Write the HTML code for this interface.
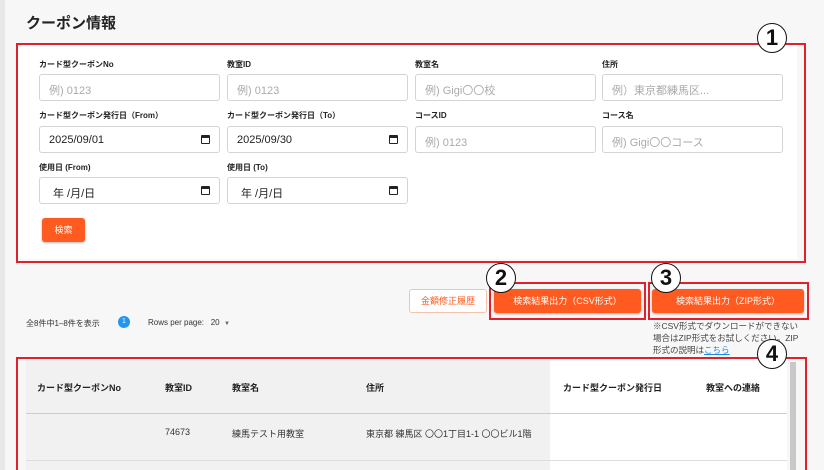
<!DOCTYPE html>
<html><head><meta charset="utf-8"><style>
*{box-sizing:border-box;margin:0;padding:0}
html{width:824px;height:470px;overflow:hidden}
body{width:824px;height:470px;overflow:hidden;background:#f7f7f7;font-family:"Liberation Sans","Noto Sans CJK JP",sans-serif;position:relative;color:#222}
.a{position:absolute}
.red{position:absolute;border:2px solid #e0202c}
.lbl{position:absolute;font-size:8px;font-weight:bold;color:#222}
.in{position:absolute;width:181px;height:27px;border:1px solid #d4d4d4;border-radius:3px;background:#fff;font-size:11px;color:#aaa;padding:7px 0 0 9px}
.in.d{color:#222}
.cal{position:absolute;right:9px;top:8px;width:9px;height:9px;border:1.5px solid #222;border-top-width:3px;border-radius:1px}
.num{position:absolute;width:30px;height:30px;border:1.5px solid #111;border-radius:50%;background:#fff;font-size:22px;font-weight:bold;text-align:center;line-height:28px;color:#111}
.btn{position:absolute;background:#ff5a1f;color:#fff;font-size:9px;text-align:center;border-radius:3px;box-shadow:0 1px 2px rgba(0,0,0,.3)}
</style></head><body>
<div class="a" style="left:0;top:0;width:5px;height:470px;background:#e8e8e8"></div>
<div class="a" style="left:26px;top:12px;font-size:15px;font-weight:bold">クーポン情報</div>
<div class="a" style="left:18px;top:45px;width:779px;height:214px;background:#fff"></div>
<div class="red" style="left:16px;top:43px;width:790px;height:220px"></div>
<div class="num" style="left:757px;top:23px">1</div>

<div class="lbl" style="left:39px;top:59px">カード型クーポンNo</div>
<div class="lbl" style="left:227px;top:59px">教室ID</div>
<div class="lbl" style="left:415px;top:59px">教室名</div>
<div class="lbl" style="left:602px;top:59px">住所</div>
<div class="in" style="left:39px;top:74px">例) 0123</div>
<div class="in" style="left:227px;top:74px">例) 0123</div>
<div class="in" style="left:415px;top:74px">例) Gigi〇〇校</div>
<div class="in" style="left:602px;top:74px">例）東京都練馬区...</div>

<div class="lbl" style="left:39px;top:110px">カード型クーポン発行日（From）</div>
<div class="lbl" style="left:227px;top:110px">カード型クーポン発行日（To）</div>
<div class="lbl" style="left:415px;top:110px">コースID</div>
<div class="lbl" style="left:602px;top:110px">コース名</div>
<div class="in d" style="left:39px;top:126px">2025/09/01<div class="cal"></div></div>
<div class="in d" style="left:227px;top:126px">2025/09/30<div class="cal"></div></div>
<div class="in" style="left:415px;top:126px">例) 0123</div>
<div class="in" style="left:602px;top:126px">例) Gigi〇〇コース</div>

<div class="lbl" style="left:39px;top:162px">使用日 (From)</div>
<div class="lbl" style="left:227px;top:162px">使用日 (To)</div>
<div class="in d" style="left:39px;top:177px;padding-left:13px">年 /月/日<div class="cal"></div></div>
<div class="in d" style="left:227px;top:177px;padding-left:13px">年 /月/日<div class="cal"></div></div>
<div class="btn" style="left:42px;top:218px;width:43px;height:24px;line-height:24px">検索</div>

<div class="a" style="left:409px;top:289px;width:78px;height:24px;border:1px solid #f5c2ad;border-radius:3px;color:#ff5a1f;font-size:9px;text-align:center;line-height:22px;background:#fff">金額修正履歴</div>
<div class="btn" style="left:494px;top:289px;width:147px;height:24px;line-height:24px">検索結果出力（CSV形式）</div>
<div class="red" style="left:489px;top:282px;width:157px;height:38px"></div>
<div class="num" style="left:486px;top:263px">2</div>
<div class="btn" style="left:652px;top:289px;width:152px;height:24px;line-height:24px">検索結果出力（ZIP形式）</div>
<div class="red" style="left:648px;top:282px;width:161px;height:38px"></div>
<div class="num" style="left:651px;top:263px">3</div>

<div class="a" style="left:26px;top:318px;font-size:8px;color:#333">全8件中1–8件を表示</div>
<div class="a" style="left:118px;top:316px;width:12px;height:12px;border-radius:50%;background:#2196f3;color:#fff;font-size:7px;text-align:center;line-height:12px">1</div>
<div class="a" style="left:148px;top:318px;font-size:8px;color:#333">Rows per page:&nbsp;&nbsp;&nbsp;20&nbsp;&nbsp;<span style="font-size:6px;color:#666">▼</span></div>
<div class="a" style="left:653px;top:320px;width:150px;font-size:8.5px;line-height:12px;color:#444">※CSV形式でダウンロードができない場合はZIP形式をお試しください。ZIP形式の説明は<span style="color:#1e88e5;text-decoration:underline">こちら</span></div>

<div class="a" style="left:26px;top:360px;width:524px;height:110px;background:#f1f1f1"></div>
<div class="a" style="left:550px;top:360px;width:237px;height:110px;background:#fff"></div>
<div class="a" style="left:26px;top:413px;width:761px;height:1px;background:#ccc"></div>
<div class="a" style="left:26px;top:460px;width:761px;height:1px;background:#ddd"></div>
<div class="a" style="left:790px;top:362px;width:6px;height:108px;background:#c8c8c8"></div>
<div class="a" style="left:37px;top:381px;font-size:9px;font-weight:bold">カード型クーポンNo</div>
<div class="a" style="left:165px;top:381px;font-size:9px;font-weight:bold">教室ID</div>
<div class="a" style="left:232px;top:381px;font-size:9px;font-weight:bold">教室名</div>
<div class="a" style="left:366px;top:381px;font-size:9px;font-weight:bold">住所</div>
<div class="a" style="left:563px;top:381px;font-size:9px;font-weight:bold">カード型クーポン発行日</div>
<div class="a" style="left:706px;top:381px;font-size:9px;font-weight:bold">教室への連絡</div>
<div class="a" style="left:165px;top:427px;font-size:9px;color:#333">74673</div>
<div class="a" style="left:232px;top:427px;font-size:9px;color:#333">練馬テスト用教室</div>
<div class="a" style="left:366px;top:427px;font-size:9px;color:#333">東京都 練馬区 〇〇1丁目1-1 〇〇ビル1階</div>
<div class="a" style="left:16px;top:357px;width:791px;height:113px;border:2px solid #e0202c;border-bottom:none"></div>
<div class="num" style="left:757px;top:339px">4</div>
</body></html>
